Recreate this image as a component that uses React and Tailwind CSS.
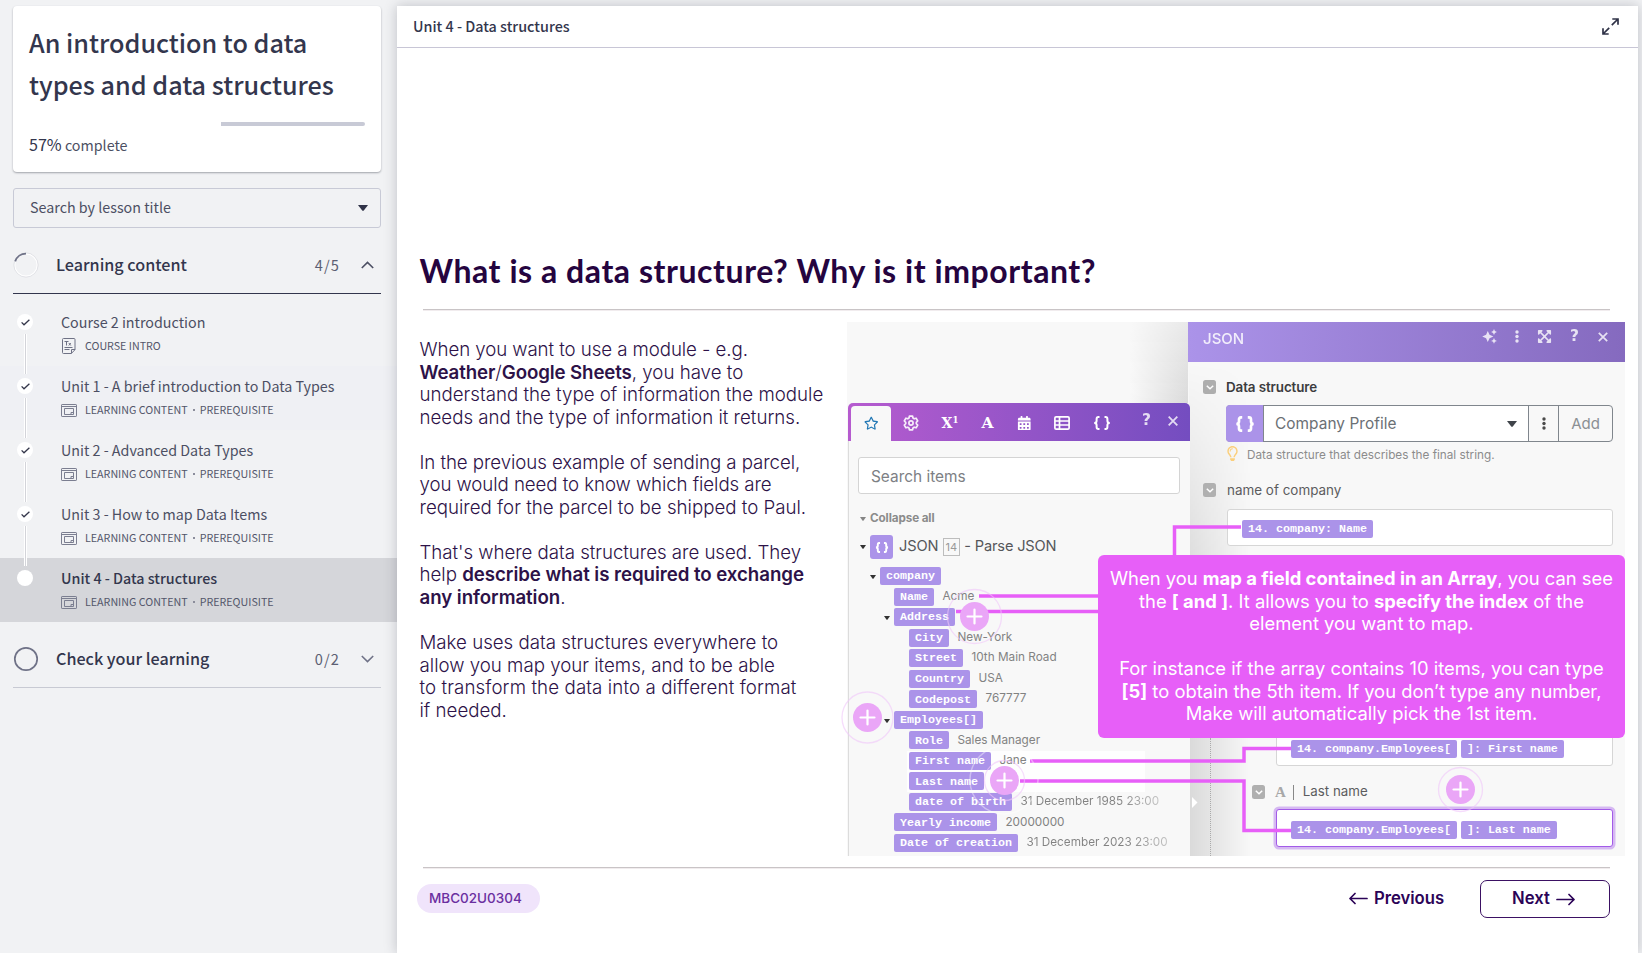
import React from "react";
import { FaRegStar, FaRegLightbulb, FaExpandArrowsAlt, FaCalendarAlt } from "react-icons/fa";

const lessons = [
  { title: "Course 2 introduction", meta: ["COURSE INTRO"], state: "done", doc: true },
  { title: "Unit 1 - A brief introduction to Data Types", meta: ["LEARNING CONTENT", "PREREQUISITE"], state: "hover" },
  { title: "Unit 2 - Advanced Data Types", meta: ["LEARNING CONTENT", "PREREQUISITE"], state: "done" },
  { title: "Unit 3 - How to map Data Items", meta: ["LEARNING CONTENT", "PREREQUISITE"], state: "done" },
  { title: "Unit 4 - Data structures", meta: ["LEARNING CONTENT", "PREREQUISITE"], state: "active" },
];

function DocIcon() {
  return (
    <svg width="14" height="16" viewBox="0 0 14 16" fill="none" stroke="#6f7285" strokeWidth="1">
      <path d="M.5 1.500a1 1 0 0 1 1-1h10.500a1 1 0 0 1 1 1v10.200l-3.700 3.800H1.500a1 1 0 0 1-1-1z" />
      <path d="M13 11.500H9.500v4" />
      <path d="M2.500 3.500h4M4.500 3.500v4M6.800 5l2 2.500M8.800 5l-2 2.500M2.500 9.500h8M2.500 11.500h5" />
    </svg>
  );
}

function WindowIcon() {
  return (
    <svg width="16" height="13" viewBox="0 0 16 13" fill="none" stroke="#7b7e90" strokeWidth="1">
      <rect x=".5" y=".5" width="15" height="12" rx=".6" />
      <path d="M.5 2.500h15M3.500 4.500h9v6h-9zM12.500 8.500h-2.500v2" />
    </svg>
  );
}

function Lesson({ item, last }) {
  const active = item.state === "active";
  const bg = active ? "bg-[#d5d6da]" : item.state === "hover" ? "bg-[#eff0f4]" : "";
  return (
    <li className={`relative flex h-16 pl-[17px] ${bg}`}>
      <span className="relative z-10 mt-[12px] flex size-4 shrink-0 items-center justify-center rounded-full bg-white">
        {!active && (
          <svg width="9" height="7" viewBox="0 0 9 7" fill="none" stroke="#33364a" strokeWidth="1.3">
            <path d="M.6 3.4 3 5.8 8.4.8" />
          </svg>
        )}
      </span>
      {!last && <span className="absolute left-[24px] top-[32px] z-10 h-10 w-[3px] border-x border-white bg-[#d3d4d9]" />}
      <div className="ml-[28px] flex flex-col">
        <span className={`mt-[8px] whitespace-nowrap text-[14.3px] leading-6 ${active ? "font-medium text-[#33364d]" : "text-[#4c4f63]"}`}>
          {item.title}
        </span>
        <div className="mt-[4px] flex h-4 items-center text-[10.7px] leading-4 text-[#53566a]">
          <span className="flex w-6 items-center">{item.doc ? <span className="ml-[1px]"><DocIcon /></span> : <WindowIcon />}</span>
          <span>{item.meta[0]}</span>
          {item.meta[1] && (
            <>
              <span className="ml-[5.5px] mr-[4.5px] size-[2px] bg-[#8b8d9b]" />
              <span>{item.meta[1]}</span>
            </>
          )}
        </div>
      </div>
    </li>
  );
}

function Sidebar() {
  return (
    <aside className="flex w-[397px] shrink-0 flex-col pt-[6px] text-[#33364d]">
      <div className="ml-[13px] flex h-[166px] w-[368px] flex-col rounded-[4px] bg-white px-[16px] pt-[15px] shadow-[0_1px_2px_rgba(40,44,60,0.4)]">
        <h1 className="text-[25.2px] font-medium leading-[42px]">
          An introduction to data
          <br />
          types and data structures
        </h1>
        <div className="ml-auto mt-[17px] h-[4px] w-[144px] rounded-r-full bg-[#c8cad6]" />
        <p className="mt-[6px] text-[14.3px] leading-6 text-[#4c4f63]">
          <span className="text-[16.1px] text-[#33364d]">57%</span> complete
        </p>
      </div>
      <div className="ml-[13px] mt-[16px] flex h-10 w-[368px] items-center justify-between rounded-[3px] border border-[#c8cad6] pl-[16px] pr-[12px]">
        <span className="mb-[2px] text-[14.3px] leading-6 text-[#4c4f63]">Search by lesson title</span>
        <svg width="10" height="6" viewBox="0 0 10 6"><path d="M0 0h10L5.8 5.4q-.8.9-1.6 0z" fill="#2f3247" /></svg>
      </div>
      <div className="ml-[13px] mt-[9px] flex h-[57px] w-[368px] items-center border-b border-[#33364d]">
        <svg width="26" height="26" viewBox="0 0 26 26" fill="none">
          <circle cx="13" cy="13" r="11.4" stroke="#fff" strokeWidth="1.6" />
          <circle cx="13" cy="13" r="12.1" stroke="#c4c6cf" strokeWidth=".5" />
          <path d="M2.2 9.4A11.4 11.4 0 0 1 13 1.6" stroke="#6f7287" strokeWidth="1.8" />
        </svg>
        <span className="mb-[2px] ml-[17px] text-[16.15px] font-medium">Learning content</span>
        <span className="ml-auto text-[14.6px] tracking-[1.1px] text-[#5c5f73]">4/5</span>
        <svg className="ml-[21px] mr-[7px]" width="13" height="8" viewBox="0 0 13 8" fill="none" stroke="#4c4f63" strokeWidth="1.6"><path d="m.8 7 5.7-5.6L12.2 7" /></svg>
      </div>
      <ul className="mt-[8px]">
        {lessons.map((l, i) => <Lesson key={l.title} item={l} last={i === lessons.length - 1} />)}
      </ul>
      <div className="ml-[13px] mt-[8px] flex h-[58px] w-[368px] items-center border-b border-[#c8cad3] pt-[1px]">
        <svg width="26" height="26" viewBox="0 0 26 26" fill="none"><circle cx="13" cy="13" r="11.2" stroke="#6f7287" strokeWidth="1.7" /></svg>
        <span className="mb-[2px] ml-[17px] text-[16.15px] font-medium">Check your learning</span>
        <span className="ml-auto text-[14.6px] tracking-[1.1px] text-[#5c5f73]">0/2</span>
        <svg className="ml-[21px] mr-[7px]" width="13" height="8" viewBox="0 0 13 8" fill="none" stroke="#6f7287" strokeWidth="1.6"><path d="m.8 1 5.7 5.6L12.2 1" /></svg>
      </div>
    </aside>
  );
}

function Tag({ children }) {
  return (
    <span className="flex h-[18px] items-center whitespace-pre rounded-[2px] bg-[#ab93e9] px-[6px] pt-[2px] font-['Liberation_Mono',monospace] text-[11.67px] font-bold leading-none text-white">
      {children}
    </span>
  );
}

const indents = ["pl-[31px]", "pl-[45px]", "pl-[60px]"];
const tree = [
  { level: 0, tag: "company", open: true },
  { level: 1, tag: "Name", value: "Acme" },
  { level: 1, tag: "Address", open: true },
  { level: 2, tag: "City", value: "New-York" },
  { level: 2, tag: "Street", value: "10th Main Road" },
  { level: 2, tag: "Country", value: "USA" },
  { level: 2, tag: "Codepost", value: "767777" },
  { level: 1, tag: "Employees[]", open: true },
  { level: 2, tag: "Role", value: "Sales Manager" },
  { level: 2, tag: "First name", value: "Jane", lit: true },
  { level: 2, tag: "Last name", lit: true },
  { level: 2, tag: "date of birth", value: "31 December 1985 23:00", fade: true },
  { level: 1, tag: "Yearly income", value: "20000000" },
  { level: 1, tag: "Date of creation", value: "31 December 2023 23:00", fade: true },
];

function Caret({ className }) {
  return <svg className={className} width="6" height="4" viewBox="0 0 6 4"><path d="M0 0h6L3.6 3.4q-.6.6-1.2 0z" /></svg>;
}

function Brace({ w, h, sw = 2.2 }) {
  return (
    <svg width={w} height={h} viewBox="0 0 18 14" fill="none" stroke="currentColor" strokeWidth={sw}>
      <path d="M6.500 1.100H5.400C4 1.100 3.600 1.800 3.600 3v1.800C3.600 6 3 7 1.200 7c1.800 0 2.400 1 2.400 2.200V11c0 1.200.4 1.900 1.800 1.900h1.100M11.500 1.100h1.100c1.400 0 1.800.7 1.800 1.900v1.800c0 1.200.6 2.200 2.400 2.200-1.800 0-2.400 1-2.400 2.200V11c0 1.200-.4 1.900-1.800 1.900h-1.100" />
    </svg>
  );
}

function PickerPanel() {
  return (
    <div className="absolute left-[1px] top-[81px] flex h-[453px] w-[342px] flex-col overflow-hidden rounded-t-[5px] bg-[#f8f8f8]">
      <div className="flex h-[38px] shrink-0 items-center bg-linear-to-r from-[#b65bcf] to-[#744dc0] pl-[3px] text-white">
        <div className="mt-[3px] flex h-[35px] w-[40px] items-center justify-center rounded-t-[4px] bg-[#f8f8f8] text-[#2278b5]">
          <FaRegStar size={14.5} />
        </div>
        <div className="mt-[2px] flex w-[40px] justify-center opacity-90">
          <svg width="16" height="16" viewBox="0 0 16 16" fill="none" stroke="#fff" strokeWidth="1.7" strokeLinejoin="round">
            <path d="m6.4 1.2-.4 1.9-1.2.7-1.9-.6L1.3 6l1.4 1.3v1.4L1.3 10l1.6 2.8 1.9-.6 1.2.7.4 1.9h3.200l.4-1.9 1.200-.7 1.900.6L14.700 10l-1.400-1.300V7.300L14.700 6l-1.600-2.800-1.900.6L10 3.100l-.4-1.900z" />
            <circle cx="8" cy="8" r="2.100" />
          </svg>
        </div>
        <span className="mt-[2px] w-[38px] text-center font-['DejaVu_Serif',serif] font-bold leading-none">
          <span className="text-[14px]">X</span>
          <span className="relative -top-[5px] text-[8.500px]">1</span>
        </span>
        <span className="mt-[2px] w-[37px] text-center font-['DejaVu_Serif',serif] text-[15.500px] font-bold leading-none">A</span>
        <span className="mt-[2px] flex w-[37px] justify-center">
          <FaCalendarAlt size={14.5} />
        </span>
        <span className="mt-[2px] flex w-[38px] justify-center">
          <svg width="16" height="14" viewBox="0 0 16 14" fill="none" stroke="#fff" strokeWidth="1.700">
            <rect x=".9" y=".9" width="14.200" height="12.200" rx="1.200" />
            <path d="M1 5h14M1 9h14M5.500 1v12" />
          </svg>
        </span>
        <span className="mt-[2px] flex w-[41px] justify-center"><Brace w={18} h={14} sw={2} /></span>
        <span className="ml-[20px] mb-[2px] font-['DejaVu_Sans',sans-serif] text-[15.500px] font-bold leading-none opacity-80">?</span>
        <svg className="mb-[2px] ml-[17px] opacity-80" width="10" height="10" viewBox="0 0 9 9" stroke="#fff" strokeWidth="1.600"><path d="m.6.6 7.800 7.800M8.400.6.6 8.400" /></svg>
      </div>
      <div className="flex grow flex-col border-l border-[#dcdcdc]">
        <div className="ml-[9px] mt-[16px] flex h-[37px] w-[322px] shrink-0 items-center rounded-[3px] border border-[#d4d4d4] bg-white pl-[12px] pt-[2px] font-['Inter',sans-serif] text-[15.400px] text-[#7d7f84]">
          Search items
        </div>
        <div className="ml-[11px] mt-[15px] flex h-5 items-center gap-[4px] font-['Inter',sans-serif] text-[11.700px] font-bold tracking-[-0.100px] text-[#8b8b8b]">
          <Caret className="fill-[#858585]" /> Collapse all
        </div>
        <div className="ml-[11px] mt-[6px] flex h-6 items-center font-['Inter',sans-serif] text-[14.600px] tracking-[-0.150px] text-[#55565a]">
          <Caret className="fill-[#333]" />
          <span className="ml-[4px] mr-[6px] flex h-6 w-[23px] items-center justify-center rounded-[3px] bg-[#ab93e9] text-white"><Brace w={14} h={11} sw={2.500} /></span>
          JSON
          <span className="mx-[4.500px] flex h-[18px] w-[17px] items-center justify-center border border-[#bdbdbd] text-[11px] text-[#999]">14</span>
          - Parse JSON
        </div>
        <div className="mt-[7px] flex flex-col">
          {tree.map((r) => (
            <div key={r.tag} className={`relative flex h-[20.520px] items-center ${indents[r.level]}`}>
              {r.lit && <span className="absolute bottom-0 left-[58px] top-0 w-[238px] bg-[#fefefe]" />}
              {r.open && (
                <span className="relative w-0"><Caret className="absolute -left-[10px] -top-[1px] fill-[#333]" /></span>
              )}
              <span className="relative flex items-center">
                <Tag>{r.tag}</Tag>
                {r.value && (
                  <span className={`ml-[8.500px] whitespace-nowrap font-['Inter',sans-serif] text-[11.750px] leading-none ${r.fade ? "bg-linear-to-r from-[#828282] from-70% to-[#c4c4c4] bg-clip-text text-transparent" : "text-[#828282]"}`}>
                    {r.value}
                  </span>
                )}
              </span>
            </div>
          ))}
        </div>
      </div>
    </div>
  );
}

function Check() {
  return (
    <span className="flex h-[14px] w-[13px] shrink-0 items-center justify-center rounded-[2.500px] bg-[#b0b0b0]">
      <svg width="8" height="5" viewBox="0 0 8 5" fill="none" stroke="#fff" strokeWidth="1.500"><path d="m.8.800 3.200 3L7.200.800" /></svg>
    </span>
  );
}

function Dots({ className }) {
  return <svg className={className} width="4" height="13" viewBox="0 0 4 13"><circle cx="2" cy="2" r="1.700" /><circle cx="2" cy="6.500" r="1.700" /><circle cx="2" cy="11" r="1.700" /></svg>;
}

function JsonPanel() {
  return (
    <div className="absolute left-[341px] top-0 flex h-[534px] w-[437px] flex-col bg-[#f8f8f8] font-['Inter',sans-serif]">
      <div className="absolute left-[1px] top-[40px] h-[494px] w-[62px] bg-linear-to-r from-black/12 to-transparent [mask-image:linear-gradient(to_bottom,transparent,black_45%)]" />
      <div className="relative flex h-[40px] shrink-0 items-center bg-linear-to-r from-[#ab93e9] to-[#856abf] pl-[15px] pr-[17px] text-white">
        <span className="mt-[-5px] text-[15px] font-medium opacity-85">JSON</span>
        <div className="mb-[11px] ml-auto flex items-center opacity-80">
          <svg width="15" height="15" viewBox="0 0 15 15" fill="#fff">
            <path d="m5.800 1.900 1.700 3.900 3.900 1.700-3.900 1.700-1.700 3.900L4.100 9.200.2 7.500l3.900-1.700z" />
            <path d="m12 .1.900 2 2 .900-2 .900-.900 2-.900-2-2-.900 2-.900zM12 9l.900 2 2 .900-2 .900-.900 2-.900-2-2-.900 2-.900z" />
          </svg>
          <Dots className="ml-[18px] fill-white" />
          <FaExpandArrowsAlt className="ml-[18px]" size={15} />
          <span className="ml-[18px] font-['DejaVu_Sans',sans-serif] text-[15.500px] font-bold leading-none">?</span>
          <svg className="ml-[19px]" width="10" height="10" viewBox="0 0 10 10" stroke="#fff" strokeWidth="1.700"><path d="m.8.800 8.400 8.400M9.200.800.800 9.200" /></svg>
        </div>
      </div>
      <div className="ml-[15px] mt-[15px] flex h-5 items-center gap-[10px] text-[13.400px] font-semibold tracking-[-0.100px] text-[#3c3c3e]">
        <Check /> Data structure
      </div>
      <div className="relative ml-[38px] mt-[8px] flex h-[37px] w-[387px] rounded-[4px] border border-[#80868d] text-[#6b7075]">
        <span className="-my-px -ml-px flex w-[37px] items-center justify-center rounded-l-[4px] bg-[#ab93e9] text-white"><Brace w={20} h={16} sw={2.400} /></span>
        <span className="flex w-[266px] items-center justify-between border-x border-[#80868d] bg-white pl-[11px] pr-[11px] pt-[1px] text-[15.400px] tracking-[0.050px]">
          Company Profile
          <svg width="10" height="6" viewBox="0 0 10 6"><path d="M0 0h10L5.800 5.400q-.8.900-1.600 0z" fill="#3f444a" /></svg>
        </span>
        <span className="flex w-[30px] items-center justify-center border-r border-[#80868d]"><Dots className="fill-[#4a4a4a]" /></span>
        <span className="flex grow items-center justify-center pt-[1px] text-[15px] text-[#8b9094]">Add</span>
      </div>
      <div className="relative ml-[37px] flex h-[24px] items-center text-[11.750px] text-[#8c8c8c]">
        <FaRegLightbulb className="-mt-[2px] mr-[7px]" color="#fbcf7c" size={15} />
        <span className="mt-[3px]">Data structure that describes the final string.</span>
      </div>
      <div className="relative ml-[15px] mt-[14px] flex h-5 items-center gap-[11px] text-[13.450px] text-[#5c5c5e]">
        <Check /> name of company
      </div>
      <div className="relative ml-[39px] mt-[9px] flex h-[37px] w-[386px] items-center rounded-[3px] border border-[#d6d6d6] bg-white pl-[14px] pt-[2px]">
        <Tag>14. company: Name</Tag>
      </div>
      <div className="relative ml-[88px] mt-[183px] flex h-[37px] w-[337px] items-center gap-[4px] rounded-[3px] border border-[#d6d6d6] bg-white pl-[14px] pt-[3px]">
        <Tag>14. company.Employees[</Tag>
        <Tag>]: First name</Tag>
      </div>
      <div className="relative ml-[64px] mt-[14px] flex h-6 items-center text-[13.300px] text-[#5c5c5e]">
        <Check />
        <span className="ml-[10px] pt-[1px] font-['Liberation_Serif',serif] text-[15px] font-bold text-[#a8a8a8]">A</span>
        <span className="ml-[7px] mr-[9px] h-[15px] w-px bg-[#888]" />
        Last name
      </div>
      <div className="relative ml-[88px] mt-[5px] flex h-[38px] w-[337px] items-center gap-[4px] rounded-[3px] border border-[#a35be8] bg-white pl-[14px] pt-[4px] shadow-[0_0_0_2.500px_#d6b9f2]">
        <Tag>14. company.Employees[</Tag>
        <Tag>]: Last name</Tag>
      </div>
    </div>
  );
}

function Hotspots() {
  const plus = (x, y, r) => (
    <g key={`${x}-${y}`}>
      <circle cx={x} cy={y} r={r} fill="none" stroke="#f0c6fa" strokeOpacity=".6" strokeWidth="1.300" />
      <circle cx={x} cy={y} r="14.500" fill="#eaa6f7" />
      <path d={`M${x - 7} ${y}h14M${x} ${y - 7}v14`} stroke="#fff" strokeWidth="2.200" strokeLinecap="round" />
    </g>
  );
  return (
    <svg className="absolute -left-[10px] top-0" width="788" height="534" viewBox="-10 0 788 534" fill="none">
      <g stroke="#e75ff8" strokeWidth="3.500">
        <path d="M394 205h-66.500V240" />
        <path d="M132 274h125M109 289.500h150" />
        <path d="M183 439h214V426.500h47" />
        <path d="M173 459h224v49.500h47" />
      </g>
      <circle cx="157" cy="458" r="34" stroke="#fff" strokeOpacity=".4" strokeWidth="1.500" />
      {plus(127.5, 294.5, 27)}
      {plus(20.5, 395.5, 25.5)}
      {plus(157.5, 458.5, 20)}
      {plus(613.5, 467.5, 22)}
    </svg>
  );
}

function Figure() {
  return (
    <div className="relative h-[534px] w-[778px] shrink-0 bg-[#f8f8f8]">
      <div className="absolute left-[283px] top-0 h-[81px] w-[58px] bg-linear-to-r from-[#f8f8f8] to-[#dadada] [mask-image:linear-gradient(to_bottom,rgba(0,0,0,0.5),black)]" />
      <JsonPanel />
      <div className="absolute left-[363px] top-[416px] h-[118px] border-l border-dotted border-[#aaa]" />
      <svg className="absolute left-[345px] top-[475px]" width="6" height="11" viewBox="0 0 6 11"><path d="M0 0l5.500 5.500L0 11z" fill="#fff" /></svg>
      <PickerPanel />
      <Hotspots />
      <div className="absolute left-[251px] top-[233px] flex h-[183px] w-[527px] flex-col items-center rounded-[6px] bg-[#e75ff8] pt-[12px] text-center font-['Inter',sans-serif] text-[18.400px] leading-[22.500px] text-white">
        <p className="whitespace-nowrap">
          When you <b className="font-bold">map a field contained in an Array</b>, you can see
          <br />
          the <b className="font-bold">[ and ]</b>. It allows you to <b className="font-bold">specify the index</b> of the
          <br />
          element you want to map.
        </p>
        <p className="mt-[22.500px] whitespace-nowrap">
          For instance if the array contains 10 items, you can type
          <br />
          <b className="font-bold">[5]</b> to obtain the 5th item. If you don’t type any number,
          <br />
          Make will automatically pick the 1st item.
        </p>
      </div>
    </div>
  );
}

function Copy() {
  return (
    <div className="flex w-[427px] shrink-0 flex-col gap-[22.600px] whitespace-nowrap pt-[17px] font-['Inter',sans-serif] text-[18.700px] font-light leading-[22.530px] text-[#2d1248]">
      <p>
        <span className="tracking-[-0.080px]">When you want to use a module - e.g.</span>
        <br />
        <b className="font-semibold tracking-[-0.120px]">Weather</b>/<b className="font-semibold tracking-[-0.120px]">Google Sheets</b>, you have to
        <br />
        understand the type of information the module
        <br />
        needs and the type of information it returns.
      </p>
      <p>
        <span className="tracking-[-0.080px]">In the previous example of sending a parcel,</span>
        <br />
        <span className="tracking-[-0.080px]">you would need to know which fields are</span>
        <br />
        required for the parcel to be shipped to Paul.
      </p>
      <p>
        <span className="tracking-[-0.040px]">That's where data structures are used. They</span>
        <br />
        help <b className="font-semibold tracking-[-0.060px]">describe what is required to exchange</b>
        <br />
        <b className="font-semibold tracking-[-0.060px]">any information</b>.
      </p>
      <p>
        Make uses data structures everywhere to
        <br />
        allow you map your items, and to be able
        <br />
        <span className="tracking-[0.110px]">to transform the data into a different format</span>
        <br />
        if needed.
      </p>
    </div>
  );
}

function Arrow({ flip }) {
  return (
    <svg className={flip ? "rotate-180" : ""} width="19" height="13" viewBox="0 0 19 13" fill="none" stroke="#2b0357" strokeWidth="1.700" strokeLinejoin="round" strokeLinecap="round">
      <path d="M1 6.500h17M13 1.500l5 5-5 5" />
    </svg>
  );
}

export default function App() {
  return (
    <div className="flex h-[953px] w-[1642px] overflow-hidden bg-[#f1f2f4] font-['Noto_Sans_CJK_SC',sans-serif]">
      <Sidebar />
      <main className="relative z-20 mt-[6px] flex w-[1241px] flex-col bg-white shadow-[0_0_12px_rgba(40,44,60,0.25)]">
        <header className="flex h-[42px] shrink-0 items-center justify-between border-b border-[#c8c6d6] pl-[16px] pr-[19px]">
          <span className="mb-[2px] text-[14.350px] font-medium text-[#33364d]">Unit 4 - Data structures</span>
          <svg width="17" height="17" viewBox="0 0 17 17" fill="none" stroke="#2f3247" strokeWidth="1.700">
            <path d="M10.300 1H16v5.700M16 1 9.800 7.200M6.700 16H1v-5.700M1 16l6.200-6.200" />
          </svg>
        </header>
        <h2 className="ml-[22.500px] mt-[203px] font-['Lato',sans-serif] text-[32px] font-bold leading-10 tracking-[0.550px] text-[#25043f]">
          What is a data structure? Why is it important?
        </h2>
        <div className="ml-[26px] mt-[18px] h-[2px] w-[1187px] border-t border-[#c9c4c6] bg-[#f1ecee]" />
        <div className="ml-[22.500px] mt-[11px] flex gap-[0.500px]">
          <Copy />
          <Figure />
        </div>
        <div className="ml-[26px] mt-[11px] h-[2px] w-[1187px] border-t border-[#c9c4c6] bg-[#f1ecee]" />
        <footer className="ml-[20px] mt-[11px] flex h-[38px] w-[1193px] items-center font-['Inter',sans-serif]">
          <span className="mb-px flex h-[29px] w-[123px] items-center rounded-full bg-[#f0e4fb] pl-[12px] text-[13.500px] font-medium text-[#6b2fa0]">MBC02U0304</span>
          <span className="ml-auto flex items-center gap-[6px] text-[16.700px] font-semibold text-[#2b0357]">
            <Arrow flip /> <span className="tracking-[-0.050px]">Previous</span>
          </span>
          <span className="ml-[36px] flex h-[38px] w-[130px] items-center gap-[6px] rounded-[7px] border-[1.500px] border-[#3b1163] pl-[31px] text-[16.700px] font-semibold text-[#2b0357]">
            Next <Arrow />
          </span>
        </footer>
      </main>
    </div>
  );
}
